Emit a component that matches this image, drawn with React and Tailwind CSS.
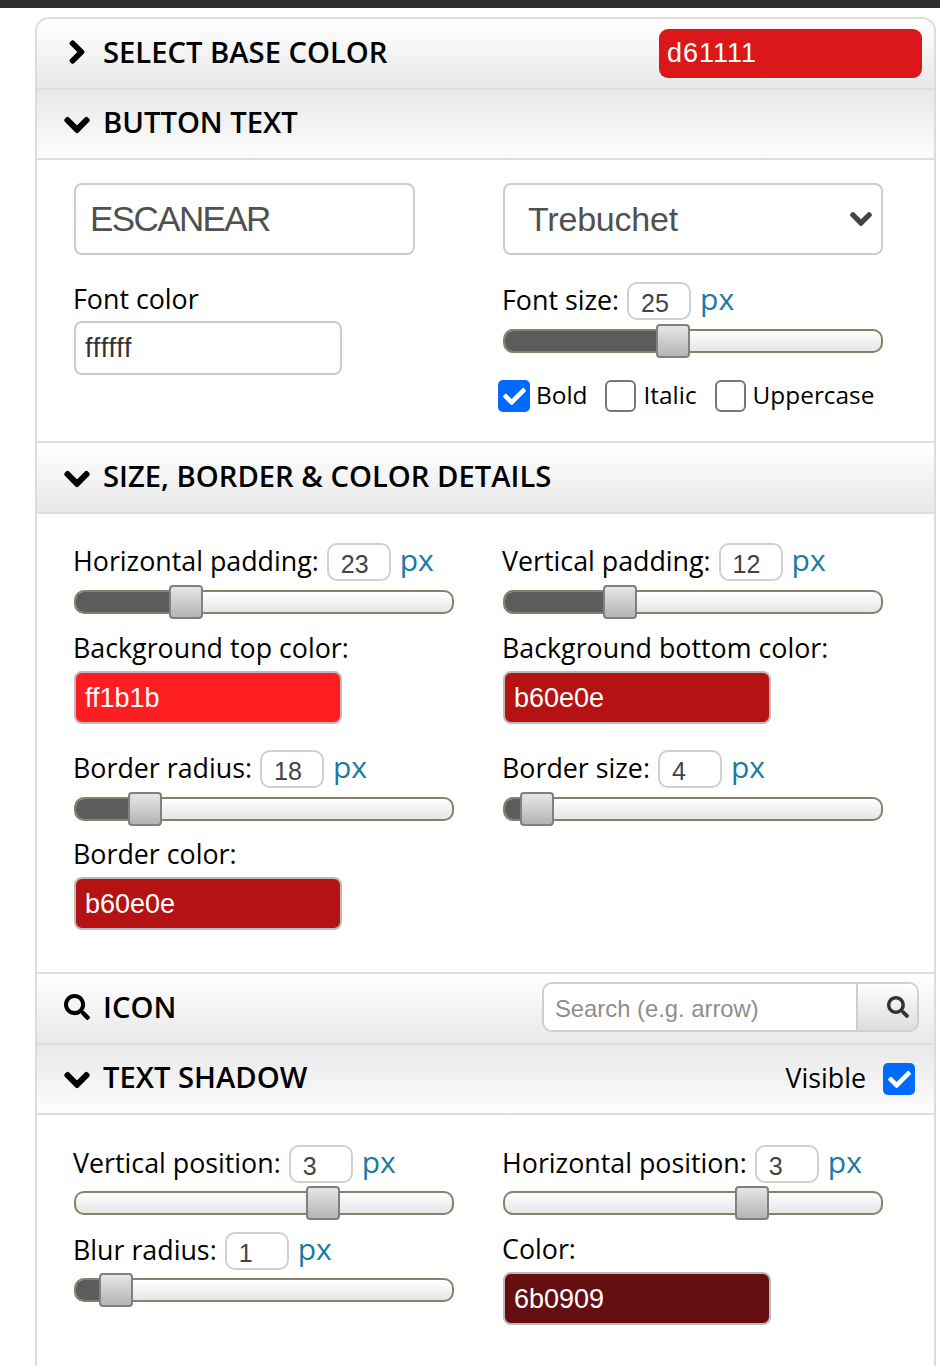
import React from 'react';
import { FaChevronRight, FaChevronDown, FaSearch, FaCheck } from 'react-icons/fa';

const Header = ({ icon, title, flip, height, children }) => (
  <div
    className={`flex items-center justify-between border-b-2 border-[#dedede] ${height} ${
      flip ? 'bg-gradient-to-b from-[#e8e8e8] to-[#fdfdfd]' : 'bg-gradient-to-b from-[#ffffff] to-[#e8e8e8]'
    }`}
  >
    <div className="flex items-center">
      <div className="ml-[20px] flex w-[40px] justify-center text-black">{icon}</div>
      <h2 className="mb-[2px] ml-[6px] font-['Open_Sans',sans-serif] text-[29.2px] font-semibold leading-none text-black">{title}</h2>
    </div>
    {children}
  </div>
);

const Label = ({ children }) => (
  <span className="-ml-[1px] mb-[2px] font-['Open_Sans',sans-serif] text-[26.8px] leading-none text-black">{children}</span>
);

const Slider = ({ left, fill, tight }) => (
  <div className={`relative h-[24px] w-[380px] rounded-[10px] border-2 border-[#8a7f68] bg-gradient-to-b from-[#ffffff] to-[#e6e6e6] ${tight ? 'mt-[8px]' : 'mt-[9px]'}`}>
    {fill && <div className="h-full rounded-l-[8px] bg-[#5c5c5c]" style={{ width: left + 4 }}></div>}
    <div
      className="absolute top-[-7px] h-[34px] w-[34px] rounded-[4px] border-2 border-[#808080] bg-gradient-to-b from-[#e6e6e6] to-[#b4b4b4]"
      style={{ left }}
    ></div>
  </div>
);

const SliderField = ({ label, value, left, fill, tight, className = '' }) => (
  <div className={className}>
    <div className="flex h-[38px] items-center">
      <Label>{label}</Label>
      <div className="ml-[8px] flex h-[38px] w-[64px] items-end rounded-[10px] border-2 border-[#d0d0d0] pl-[12px] font-['Liberation_Sans',sans-serif] text-[25px] leading-[30px] text-[#444]">
        {value}
      </div>
      <span className="mb-[4px] ml-[9px] font-['Open_Sans',sans-serif] text-[30px] leading-none text-[#1a7ba3]">px</span>
    </div>
    <Slider left={left} fill={fill} tight={tight} />
  </div>
);

const ColorField = ({ label, value, bg, className = '' }) => (
  <div className={className}>
    <div className="flex h-[38px] items-center">
      <Label>{label}</Label>
    </div>
    <div
      className={`mt-[3px] flex h-[53px] w-[268px] items-center rounded-[8px] border-2 border-[#bbbbbb] pl-[9px] pt-[1px] font-['Liberation_Sans',sans-serif] text-[27px] text-white ${bg}`}
    >
      {value}
    </div>
  </div>
);

const Check = ({ checked, className = '' }) =>
  checked ? (
    <div className={`flex h-[32px] w-[32px] items-center justify-center rounded-[5px] bg-[#0069ff] text-white ${className}`}>
      <FaCheck size={23} />
    </div>
  ) : (
    <div className={`h-[32px] w-[31px] rounded-[6px] border-2 border-[#767676] bg-white ${className}`}></div>
  );

const CheckLabel = ({ children, className = '' }) => (
  <span className={`mb-[2px] font-['Open_Sans',sans-serif] text-[24.4px] leading-none text-black ${className}`}>{children}</span>
);

const Chevron = () => <FaChevronDown size={28} stroke="currentColor" strokeWidth={30} className="mt-[3px]" />;

export default function App() {
  return (
    <div className="h-[1366px] w-[940px] overflow-hidden bg-white">
      <div className="h-[8px] bg-[#2d2e32]"></div>
      <div className="ml-[35px] mt-[9px] w-[901px] rounded-t-[14px] border-2 border-b-0 border-[#dcdcdc] pb-[60px]">
        <Header icon={<FaChevronRight size={26} stroke="currentColor" strokeWidth={30} className="-mt-[3px]" />} title="SELECT BASE COLOR" height="h-[71px] rounded-t-[12px]">
          <div className="mr-[12px] flex h-[49px] w-[263px] items-center rounded-[9px] bg-[#db1719] pl-[8px] font-['Liberation_Sans',sans-serif] text-[27px] tracking-[1px] text-white">
            d61111
          </div>
        </Header>

        <Header icon={<Chevron />} title="BUTTON TEXT" flip height="h-[70px]" />
        <div className="flex h-[283px] gap-[49px] border-b-2 border-[#dedede] pl-[37px] pt-[23px]">
          <div className="w-[380px]">
            <div className="flex h-[72px] w-[341px] items-center rounded-[8px] border-2 border-[#cccccc] pl-[14px] font-['Liberation_Sans',sans-serif] text-[35px] tracking-[-1.6px] text-[#505050]">
              ESCANEAR
            </div>
            <div className="mt-[26px] flex h-[38px] items-center">
              <Label>Font color</Label>
            </div>
            <div className="mt-[2px] flex h-[54px] w-[268px] items-center rounded-[8px] border-2 border-[#cccccc] pl-[9px] pt-[1px] font-['Liberation_Sans',sans-serif] text-[27px] tracking-[0.8px] text-[#333]">
              ffffff
            </div>
          </div>
          <div className="w-[380px]">
            <div className="flex h-[72px] items-center justify-between rounded-[8px] border-2 border-[#cccccc] pl-[23px] pr-[8px] font-['Liberation_Sans',sans-serif] text-[34px] tracking-[-0.2px] text-[#505050]">
              Trebuchet
              <FaChevronDown size={24} stroke="currentColor" strokeWidth={30} className="text-[#444]" />
            </div>
            <SliderField className="mt-[27px]" label="Font size:" value="25" left={151} fill />
            <div className="-ml-[5px] mt-[27px] flex items-center">
              <Check checked />
              <CheckLabel className="ml-[6px]">Bold</CheckLabel>
              <Check className="ml-[17px]" />
              <CheckLabel className="ml-[8px]">Italic</CheckLabel>
              <Check className="ml-[18px]" />
              <CheckLabel className="ml-[7px]">Uppercase</CheckLabel>
            </div>
          </div>
        </div>

        <Header icon={<Chevron />} title="SIZE, BORDER & COLOR DETAILS" height="h-[71px]" />
        <div className="flex h-[460px] gap-[49px] border-b-2 border-[#dedede] pl-[37px] pt-[29px]">
          <div className="w-[380px]">
            <SliderField label="Horizontal padding:" value="23" left={93} fill />
            <ColorField className="mt-[16px]" label="Background top color:" value="ff1b1b" bg="bg-[#fe1e22]" />
            <SliderField className="mt-[26px]" label="Border radius:" value="18" left={52} fill />
            <ColorField className="mt-[15px]" label="Border color:" value="b60e0e" bg="bg-[#b41213]" />
          </div>
          <div className="w-[380px]">
            <SliderField label="Vertical padding:" value="12" left={98} fill />
            <ColorField className="mt-[16px]" label="Background bottom color:" value="b60e0e" bg="bg-[#b41213]" />
            <SliderField className="mt-[26px]" label="Border size:" value="4" left={15} fill />
          </div>
        </div>

        <Header icon={<FaSearch size={26} className="-mt-[2px]" />} title="ICON" height="h-[71px]">
          <div className="mb-[3px] mr-[15px] flex h-[50px] w-[377px] overflow-hidden rounded-[10px] border-2 border-[#cfcfcf] font-['Liberation_Sans',sans-serif]">
            <div className="flex flex-1 items-center bg-white pl-[11px] pt-[3px] text-[23.8px] text-[#8e8e8e]">Search (e.g. arrow)</div>
            <div className="flex w-[61px] items-center justify-end border-l-2 border-[#cfcfcf] bg-gradient-to-b from-[#ffffff] to-[#dddddd] pr-[8px] text-[#333]">
              <FaSearch size={22} />
            </div>
          </div>
        </Header>

        <Header icon={<Chevron />} title="TEXT SHADOW" flip height="h-[70px]">
          <div className="mr-[19px] flex items-center">
            <Label>Visible</Label>
            <Check checked className="ml-[17px]" />
          </div>
        </Header>
        <div className="flex gap-[49px] pl-[37px] pt-[30px]">
          <div className="w-[380px]">
            <SliderField label="Vertical position:" value="3" left={230} tight />
            <SliderField className="mt-[17px]" label="Blur radius:" value="1" left={23} fill tight />
          </div>
          <div className="w-[380px]">
            <SliderField label="Horizontal position:" value="3" left={230} tight />
            <ColorField className="mt-[16px]" label="Color:" value="6b0909" bg="bg-[#640e10]" />
          </div>
        </div>
      </div>
    </div>
  );
}
